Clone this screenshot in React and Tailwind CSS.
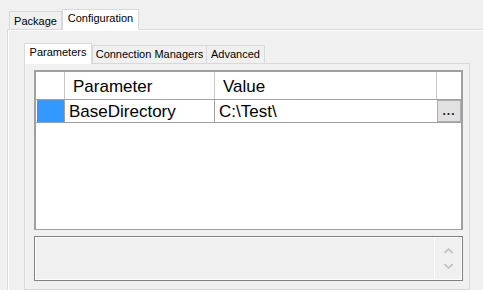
import React from 'react'

function Tab({ label, selected, className }) {
  return (
    <div
      className={`flex items-center justify-center border-t border-x border-[#d9d9d9] text-[11px] leading-none text-black ${
        selected ? 'bg-white h-[21px] pb-[3px] -mb-px relative z-10' : 'bg-[#f0f0f0] h-[18px]'
      } ${className}`}
    >
      {label}
    </div>
  )
}

function ScrollArrows() {
  return (
    <div className="w-[27px] flex flex-col items-center justify-between py-[10px] border-l border-white">
      <svg width="9" height="6" viewBox="0 0 9 6">
        <path d="M0.5 5 L4.5 1 L8.5 5" fill="none" stroke="#bfbfbf" strokeWidth="1.6" />
      </svg>
      <svg width="9" height="6" viewBox="0 0 9 6">
        <path d="M0.5 1 L4.5 5 L8.5 1" fill="none" stroke="#bfbfbf" strokeWidth="1.6" />
      </svg>
    </div>
  )
}

export default function App() {
  return (
    <div className="w-[483px] h-[290px] overflow-hidden bg-[#f0f0f0] flex flex-col font-['Liberation_Sans',Arial,sans-serif]">
      {/* outer tabs */}
      <div className="flex items-end pl-[9px] pt-[9px]">
        <Tab label="Package" className="w-[53px] pt-px" />
        <Tab label="Configuration" selected className="w-[77px]" />
      </div>

      {/* outer panel */}
      <div className="flex-1 ml-[7px] border-t border-l border-[#d9d9d9] flex flex-col">
        <div className="flex-1 border-t border-l border-white flex flex-col pl-[15px] pt-[12px] pr-[13px]">
          {/* inner tabs */}
          <div className="flex items-end">
            <Tab label="Parameters" selected className="w-[68px]" />
            <Tab label="Connection Managers" className="w-[115px]" />
            <Tab label="Advanced" className="w-[59px] -ml-px" />
          </div>

          {/* inner panel */}
          <div className="flex-1 border border-[#d9d9d9] bg-[#f0f0f0] flex flex-col pl-[9px] pr-[6px] pt-[6px] pb-[8px]">
            {/* grid */}
            <div className="h-[160px] bg-white border-x-2 border-t-2 border-b border-[#a0a0a0] flex flex-col text-[17px] leading-none text-black">
              <div className="flex h-[28px] border-b border-[#a0a0a0]">
                <div className="w-[29px] border-r border-[#c8c8c8]" />
                <div className="w-[150px] border-r border-[#c8c8c8] flex items-center pl-[8px] pt-[2px]">
                  Parameter
                </div>
                <div className="w-[222px] border-r border-[#c8c8c8] flex items-center pl-[8px] pt-[2px]">
                  Value
                </div>
                <div className="flex-1" />
              </div>
              <div className="flex h-[23px] border-b border-[#a0a0a0]">
                <div className="w-[29px] border-r border-[#a0a0a0] pl-px">
                  <div className="h-full bg-[#3399ff]" />
                </div>
                <div className="w-[150px] border-r border-[#a0a0a0] flex items-center pl-[4px] pt-px">
                  BaseDirectory
                </div>
                <div className="w-[222px] flex items-center pl-[4px] pt-px">C:\Test\</div>
                <div className="flex-1 flex items-stretch">
                  <div className="w-[24px] bg-[#e1e1e1] border border-[#adadad] flex items-end justify-center pb-[4px] text-[12px] font-bold leading-none tracking-[1px] text-[#222]">
                    ...
                  </div>
                </div>
              </div>
            </div>

            {/* description */}
            <div className="mt-[6px] h-[45px] border border-[#828282] flex">
              <div className="flex-1 flex border border-white">
                <div className="flex-1" />
                <ScrollArrows />
              </div>
            </div>
          </div>
        </div>
      </div>
    </div>
  )
}
